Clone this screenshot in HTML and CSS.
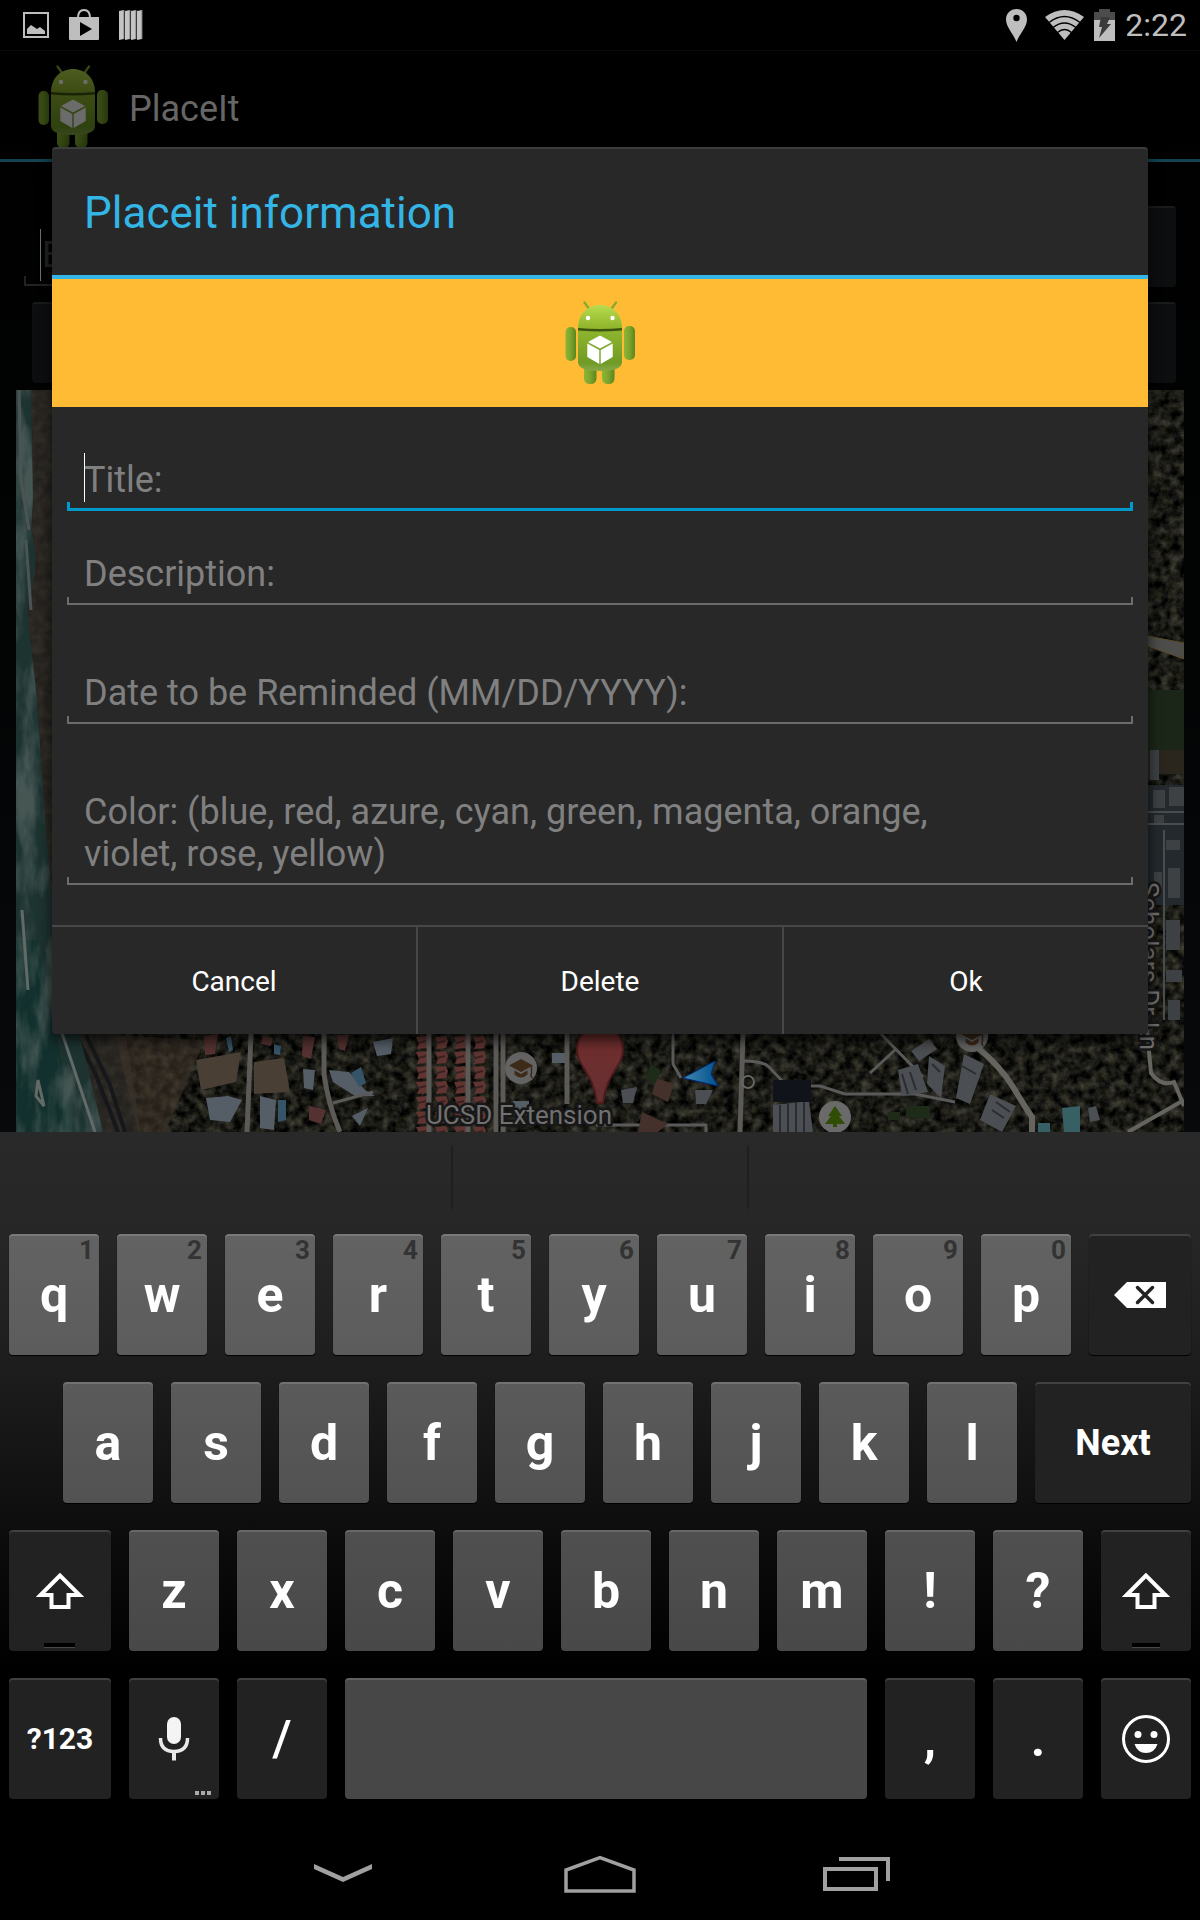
FILE: index.html
```html
<!DOCTYPE html>
<html lang="en">
<head>
<meta charset="utf-8">
<meta name="viewport" content="width=device-width, initial-scale=1">
<title>PlaceIt</title>
<link rel="stylesheet" href="styles.css">
</head>
<body>
<svg class="defs" width="0" height="0" aria-hidden="true">
  <defs>
    <linearGradient id="head" x1="0" y1="0" x2="0" y2="1"><stop offset="0" stop-color="#b9dc4e"/><stop offset="1" stop-color="#8db32a"/></linearGradient>
    <linearGradient id="torso" x1="0" y1="0" x2="0" y2="1"><stop offset="0" stop-color="#8fb52e"/><stop offset=".8" stop-color="#6f9a26"/><stop offset="1" stop-color="#8aa94a"/></linearGradient>
    <linearGradient id="limb" x1="0" y1="0" x2="1" y2="0"><stop offset="0" stop-color="#8db537"/><stop offset=".5" stop-color="#7ba52b"/><stop offset="1" stop-color="#5b8420"/></linearGradient>
    <symbol id="robot" viewBox="0 0 72 84">
      <path d="M20.500 1.500l5 7M52 1.500l-5 7" stroke="#86a834" stroke-width="2.200" stroke-linecap="round"/>
      <rect x="20" y="62" width="12.500" height="21" rx="5.500" fill="url(#limb)"/>
      <rect x="38" y="62" width="12.500" height="21" rx="5.500" fill="url(#limb)"/>
      <rect x="1.500" y="26" width="10.500" height="34" rx="5" fill="url(#limb)"/>
      <rect x="60" y="25" width="11" height="34" rx="5" fill="url(#limb)"/>
      <path d="M14 27h44v4H14z" fill="#3c5410"/>
      <path d="M14 27C14 13 24 4 36 4s22 9 22 23q-22 2-44 0z" fill="url(#head)"/>
      <path d="M14 29.500q22 2 44 0V61q0 9-22 9t-22-9z" fill="url(#torso)"/>
      <circle cx="24" cy="17" r="2.200" fill="#fff"/><circle cx="48.500" cy="17" r="2.200" fill="#fff"/>
      <path d="M36 34.500l12 6.500-12 6.500L24 41zM23.300 42.500l12 6.500v14l-12-7zM48.700 42.500l-12 6.500v14l12-7z" fill="#fff"/>
    </symbol>
    <symbol id="shift" viewBox="0 0 48 38">
      <path d="M24 3.500L4.500 23H15.500v12h17V23h11z" fill="none" stroke="#fff" stroke-width="4"/>
    </symbol>
    <symbol id="cap" viewBox="0 0 32 32">
      <circle cx="16" cy="16" r="16" fill="#636363"/>
      <path d="M16 7l12 6.500L16 20 4 13.500zM9.500 18.500l6.500 3.500 6.500-3.500v4q-6.500 6-13 0z" fill="#3e2a18"/>
      <path d="M26.500 14v7q-1.500 3 1 5" fill="none" stroke="#3e2a18" stroke-width="1.500"/>
    </symbol>
  </defs>
</svg>

<header class="status">
  <div class="status-group notices">
    <svg width="26" height="26" viewBox="0 0 26 26" aria-label="Screenshot"><path d="M1 1h24v24H1z" fill="none" stroke="#bebebe" stroke-width="2"/><path d="M4 22v-5l4-4 6 4 3-2 5 4v3z" fill="#bebebe"/></svg>
    <svg width="32" height="32" viewBox="0 0 32 32" aria-label="Play Store"><path d="M10 9q0-8 6-8t6 8" fill="none" stroke="#bebebe" stroke-width="2"/><path d="M1 8h30v22q0 1-1 1H2q-1 0-1-1z" fill="#bebebe"/><path d="M12 13l12 7-12 7z" fill="#000"/></svg>
    <svg width="24" height="30" viewBox="0 0 24 30" aria-label="Cards"><path d="M0 1l5-1v29l-5 1zM6 1l5-1v29l-5 1zM12 1l5-1v29l-5 1zM18 1l5-1v29l-5 1z" fill="#c4c4c4"/><path d="M5 0v29M11 0v29M17 0v29M23 0v29" stroke="#777" stroke-width="1"/></svg>
  </div>
  <div class="status-group">
    <svg class="pin-icon" width="21" height="33" viewBox="0 0 21 33" aria-label="Location"><path d="M10.500 0C4.500 0 0 4.500 0 10.500 0 18 7 24 10.500 33 14 24 21 18 21 10.500 21 4.500 16.500 0 10.500 0z" fill="#bebebe"/><circle cx="10.500" cy="9" r="3.200" fill="#000"/></svg>
    <svg width="39" height="30" viewBox="0 0 39 30" aria-label="Wi-Fi"><path d="M0 7Q19.500-7 39 7L19.500 30z" fill="#bebebe"/><path d="M4 12.500q15.500-12 31 0M8 17.500q11.500-9 23 0M12.500 22.500q7-6 14 0" fill="none" stroke="#000" stroke-width="1.500"/></svg>
    <svg width="21" height="32" viewBox="0 0 21 32" aria-label="Charging"><path d="M0 3h5V0h11v3h5v8H0z" fill="#4c4c4c"/><path d="M0 11h21v21H0z" fill="#bebebe"/><path d="M7 8h9l-3 7h4L5 29l3-11H5z" fill="#3a3a3a"/></svg>
    <time class="clock">2:22</time>
  </div>
</header>

<main class="stage">
  <section class="app" aria-hidden="true">
    <div class="action-bar">
      <svg width="72" height="84"><use href="#robot"/></svg>
      <span>PlaceIt</span>
    </div>
    <div class="search">
      <div class="search-field"><span class="search-hint">E</span></div>
      <button class="dim-button" type="button" tabindex="-1"></button>
    </div>
    <div class="tools"><button class="dim-button wide" type="button" tabindex="-1"></button></div>
    <div class="map">
      <svg viewBox="0 0 1168 742" preserveAspectRatio="xMidYMax slice">
        <defs>
          <filter id="land" x="0" y="0" width="100%" height="100%" color-interpolation-filters="sRGB">
            <feTurbulence type="fractalNoise" baseFrequency=".11" numOctaves="5" seed="8"/>
            <feColorMatrix values=".42 0 0 0 -.105  .4 .02 0 0 -.105  .34 0 .04 0 -.105  0 0 0 0 1"/>
          </filter>
          <filter id="surf" x="0" y="0" width="100%" height="100%" color-interpolation-filters="sRGB">
            <feTurbulence type="fractalNoise" baseFrequency=".05 .016" numOctaves="4" seed="3"/>
            <feColorMatrix values="0 0 0 0 .34  0 0 0 0 .4  0 0 0 0 .39  3 0 0 0 -1.200"/>
          </filter>
          <clipPath id="sea"><path d="M0 0h15l2 110-2 30q10 30-4 80l10 90 8 120 8 90 14 60 14 70 22 92H0z"/></clipPath>
          <pattern id="roofs" width="19" height="15" patternUnits="userSpaceOnUse"><path d="M1 2l11-1 2 5-2 7-10 1 2-5z" fill="#603431"/><path d="M3 8l8-2" stroke="#3b2020" stroke-width="2"/></pattern>
          <linearGradient id="pin" x1="0" y1="0" x2="0" y2="1"><stop offset="0" stop-color="#742e2e"/><stop offset="1" stop-color="#652f31"/></linearGradient>
          <linearGradient id="arrow" x1="0" y1="0" x2="1" y2="0"><stop offset="0" stop-color="#4288b0"/><stop offset="1" stop-color="#00508c"/></linearGradient>
        </defs>
        <rect width="1168" height="742" fill="#1b1c19"/>
        <rect width="1168" height="742" filter="url(#land)"/>
        <path d="M0 0h40v560l70 90 15 92H0z" fill="#302c28" opacity=".75"/>
        <path d="M99 645l90 5-40 92h-27z" fill="#3d342a" opacity=".6"/>
        <path d="M60 645l20 40 22 57M70 645l24 50 15 47" fill="none" stroke="#16171a" stroke-width="4"/>
        <g clip-path="url(#sea)">
          <rect width="140" height="742" fill="#1d3330"/>
          <path d="M0 550h20l40 192H0z" fill="#12302d"/>
          <rect width="140" height="742" filter="url(#surf)" opacity=".7"/>
        </g>
        <path d="M3 0l2 90 8 50M10 150l5 70" fill="none" stroke="#4c5453" stroke-width="3"/>
        <path d="M6 520l6 80M45 640l20 60 14 42M22 690l6 26-8-10z" fill="none" stroke="#626a68" stroke-width="3"/>
        <g fill="#4a3f34"><path d="M180 670l45-8-5 30-35 8zM238 672l30-4 6 34-36 2z"/></g>
        <g fill="#553231"><path d="M188 646l14-2-3 20-10 1zM287 646l12 1-4 22-9-3zM321 645l12 0-4 16-6-2zM247 646l10 2-2 8-10-2zM293 716l17 4-5 14-12-4z"/></g>
        <g fill="#555e67"><path d="M287 679l12 1-2 20-9-2zM313 680l20 2 16 18 10 6-20 0-22-14zM190 708l22-2 14 4-12 22-20-2zM244 706l16 4-2 30-14-2zM357 652l20-4-2 16-14 2zM336 726l16-8-8 18zM536 663l14 0v10h-14zM497 711l16 0v14h-16z"/></g>
        <g fill="#365468"><path d="M210 648l5-2 2 14-4 2zM262 710l8 0 0 20-8 2zM335 683l10-6 5 16-7 4zM258 654l7 2-1 9-6-1z"/></g>
        <rect x="400" y="645" width="72" height="97" fill="url(#roofs)"/>
        <g fill="none" stroke="#5c5a57" stroke-width="5"><path d="M235 644l-4 98M308 644v40q4 30 16 58M480 644v98M487 644v98M413 644v98M452 644v98M551 644v70M727 644l-3 98"/></g>
        <g fill="none" stroke="#5a5a5a" stroke-width="3"><path d="M317 713l40-11M657 644v30l8 14M865 644l42 43M854 683l25-23M630 735h60v7M829 704h70l40 8M580 735h60M727 671q20 0 26 6l18 19h33l25 8"/></g>
        <path d="M961 657q24 20 36 40t19 30v20" fill="none" stroke="#66645f" stroke-width="6"/>
        <path d="M1131 640l4 43q10 14 23 9l10 24M1112 742l56-32" fill="none" stroke="#66645f" stroke-width="4"/>
        <g fill="#4b4e52"><path d="M757 715l36-4 4 31h-40zM882 680l20-6 10 28-26 4zM913 666l16 10-4 32-14-14zM948 664l20 10-14 40-14-6zM974 704l26 12-14 26-22-12zM605 700l16-3-4 16-10 0zM679 700l18 0-7 14-10 0zM895 661l18-12 8 10-18 12zM1072 718l8-2 4 14-10 2z"/></g>
        <path d="M757 690h38v22h-38z" fill="#10141a"/>
        <path d="M764 715v27M772 713v29M780 712v30M788 712v30M886 684l6 20M894 682l6 18M916 674l8 8M946 676l14 8M980 712l14 10M976 720l12 8" stroke="#2b2d30" stroke-width="2"/>
        <g fill="#45312c"><path d="M640 688l18 6-6 18-16-8zM626 722l26 12-10 8h-20z"/></g>
        <g fill="#376064"><path d="M1046 718l18-2v26l-16 0zM1022 733h12v9h-12z"/></g>
        <g fill="#1d2b18"><path d="M890 716h24v12h-24zM872 722h12v8h-12zM635 674l10 6-6 14-10-6z"/></g>
        <circle cx="732" cy="692" r="6" fill="none" stroke="#666" stroke-width="2"/>
        <path d="M1126 245l42 8v16l-42-15z" fill="#4d4d4b" stroke="#5a4c26" stroke-width="1"/>
        <path d="M1130 300h38v60h-38z" fill="#1c2618"/><path d="M1132 360h36v24h-36z" fill="#2a261e"/>
        <g fill="#24292d"><path d="M1132 395h36v120h-36z"/></g>
        <g fill="#3d4144"><path d="M1134 360h9v30h-9zM1137 400h12v18h-12zM1153 397h15v19h-15zM1138 425h10v10h-10zM1150 450h14v10h-14zM1152 478h12v30h-12zM1138 482h8v18h-8zM1150 530h14v30h-14zM1150 580h16v12h-16zM1152 610h12v20h-12z"/></g>
        <path d="M1132 422h36M1132 434h36M1148 440v190" stroke="#4a4d50" stroke-width="2"/>
        <path d="M1080 24h40q2 0 2 2v55q0 2-2 2h-40z" fill="#484848"/>
        <use href="#cap" x="489" y="662" width="32" height="32"/>
        <use href="#cap" x="940" y="630" width="32" height="32"/>
        <circle cx="819" cy="727" r="16" fill="#6a6a6a"/>
        <path d="M819 716l7 10h-3l6 8h-8v3h-4v-3h-8l6-8h-3z" fill="#2f4d05"/>
        <path d="M584 636c-14 0-23 10-23 24 0 16 17 24 20 53h6c3-29 20-37 20-53 0-14-9-24-23-24z" fill="url(#pin)" stroke="#4e1b1c" stroke-width="2"/>
        <path d="M667 688l32-17-4 13 7 12z" fill="url(#arrow)" stroke="#002c7a" stroke-width="1"/>
        <text class="map-label" x="410" y="734">UCSD Extension</text>
        <text class="map-label" text-anchor="end" transform="translate(1124 660) rotate(90)">Scholars Dr Ln</text>
      </svg>
    </div>
  </section>

  <form class="dialog" role="dialog" aria-labelledby="dialog-title">
    <h1 class="dialog-title" id="dialog-title">Placeit information</h1>
    <div class="banner"><svg width="72" height="84" aria-hidden="true"><use href="#robot"/></svg></div>
    <div class="fields">
      <div class="focus-wrap">
        <input class="field focused" type="text" aria-label="Title" placeholder="Title:">
        <span class="caret"></span>
      </div>
      <input class="field description" type="text" aria-label="Description" placeholder="Description:">
      <input class="field" type="text" aria-label="Date to be reminded" placeholder="Date to be Reminded (MM/DD/YYYY):">
      <textarea class="field" rows="2" aria-label="Color" placeholder="Color: (blue, red, azure, cyan, green, magenta, orange,&#10;violet, rose, yellow)"></textarea>
    </div>
    <div class="actions">
      <button type="button">Cancel</button>
      <button type="button">Delete</button>
      <button type="button">Ok</button>
    </div>
  </form>
</main>

<section class="keyboard" aria-label="Keyboard">
  <div class="suggestions"><span></span><span class="middle"></span><span></span></div>
  <div class="row">
    <button class="key">q<small>1</small></button><button class="key">w<small>2</small></button><button class="key">e<small>3</small></button><button class="key">r<small>4</small></button><button class="key">t<small>5</small></button><button class="key">y<small>6</small></button><button class="key">u<small>7</small></button><button class="key">i<small>8</small></button><button class="key">o<small>9</small></button><button class="key">p<small>0</small></button>
    <button class="key dark mid" aria-label="Backspace"><svg width="52" height="26" viewBox="0 0 52 26"><path d="M0 13L13 0h39v26H13z" fill="#fff"/><path d="M23.500 5.500l15 15M38.500 5.500l-15 15" stroke="#222" stroke-width="3.500" stroke-linecap="round"/></svg></button>
  </div>
  <div class="row indent">
    <button class="key">a</button><button class="key">s</button><button class="key">d</button><button class="key">f</button><button class="key">g</button><button class="key">h</button><button class="key">j</button><button class="key">k</button><button class="key">l</button>
    <button class="key dark next">Next</button>
  </div>
  <div class="row">
    <button class="key dark mid lock" aria-label="Shift"><svg width="48" height="38"><use href="#shift"/></svg></button>
    <button class="key">z</button><button class="key">x</button><button class="key">c</button><button class="key">v</button><button class="key">b</button><button class="key">n</button><button class="key">m</button><button class="key">!</button><button class="key">?</button>
    <button class="key dark lock" aria-label="Shift"><svg width="48" height="38"><use href="#shift"/></svg></button>
  </div>
  <div class="row">
    <button class="key dark mid symbols">?123</button>
    <button class="key dark" aria-label="Voice input"><svg width="32" height="44" viewBox="0 0 32 44"><rect x="9" y="0" width="14" height="27" rx="7" fill="#f4f4f4"/><path d="M2.500 21q0 13.500 13.500 13.500T29.500 21" fill="none" stroke="#e8e8e8" stroke-width="3.500"/><path d="M16 34v9.500" stroke="#e8e8e8" stroke-width="4"/></svg><span class="more"></span></button>
    <button class="key dark slash">/</button>
    <button class="key space" aria-label="Space"></button>
    <button class="key dark">,</button>
    <button class="key dark">.</button>
    <button class="key dark" aria-label="Emoji"><svg width="48" height="48" viewBox="0 0 48 48"><circle cx="24" cy="24" r="22.500" fill="none" stroke="#fff" stroke-width="3"/><circle cx="16" cy="19.500" r="3.500" fill="#fff"/><circle cx="32" cy="19.500" r="3.500" fill="#fff"/><path d="M12.500 29h23q-3 9-11.500 9t-11.500-9z" fill="#fff"/></svg></button>
  </div>
</section>

<nav class="system-nav" aria-label="System">
  <button aria-label="Hide keyboard"><svg width="58" height="20" viewBox="0 0 58 20"><path d="M0 0l29 13L58 0v5L29 18 0 5z" fill="#a0a0a0"/></svg></button>
  <button aria-label="Home"><svg width="72" height="38" viewBox="0 0 72 38"><path d="M2 36V15L36 2.500 70 15v21z" fill="none" stroke="#a0a0a0" stroke-width="3.500"/></svg></button>
  <button aria-label="Recent apps"><svg width="68" height="34" viewBox="0 0 68 34"><path d="M2 12h51v20H2z" fill="none" stroke="#a0a0a0" stroke-width="4"/><path d="M16 2h49v22" fill="none" stroke="#a0a0a0" stroke-width="4"/></svg></button>
</nav>
</body>
</html>
```
FILE: styles.css
```css
* { box-sizing: border-box; }

body {
  margin: 0;
  min-height: 100vh;
  display: flex;
  flex-direction: column;
  background: #000;
  color: #fff;
  font-family: Roboto, "Noto Sans", sans-serif;
}

svg { display: block; flex: none; }
.defs { position: absolute; }
button { font-family: inherit; color: inherit; border: 0; padding: 0; background: none; }

/* Status bar */
.status {
  height: 51px;
  display: flex;
  align-items: center;
  justify-content: space-between;
  padding: 0 13px 0 23px;
  border-bottom: 1px solid #0a0a0a;
}
.status-group { display: flex; align-items: center; gap: 10px; }
.notices { gap: 19px; }
.pin-icon { margin-right: 8px; }
.clock { font-size: 32px; line-height: 40px; color: #bebebe; }

/* App behind the dialog; both share one grid cell */
.stage { flex: 1; display: grid; grid-template: 1fr / 1fr; }
.app, .dialog { grid-area: 1 / 1; min-width: 0; }
.app {
  display: flex;
  flex-direction: column;
  background: linear-gradient(#000, #020303 50%, #08090b);
}
.action-bar {
  height: 111px;
  display: flex;
  align-items: center;
  gap: 20px;
  padding: 3px 0 0 37px;
  border-bottom: 3px solid #134353;
  font-size: 36px;
  line-height: 44px;
  color: #666;
}
.action-bar svg { filter: brightness(.42); }
.action-bar span { padding-top: 4px; }
.search { display: flex; padding: 44px 24px 0; gap: 16px; }
.search-field {
  flex: 1;
  align-self: flex-start;
  height: 80px;
  padding: 23px 16px 0;
  border-bottom: 2px solid #222;
  background: linear-gradient(#222, #222) left bottom / 2px 8px no-repeat;
}
.search-hint {
  display: block;
  border-left: 1px solid #707070;
  padding-left: 1px;
  font-size: 36px;
  line-height: 52px;
  color: #222;
}
.dim-button {
  width: 160px;
  height: 81px;
  border-radius: 4px;
  border-top: 2px solid #181a1b;
  background: #0c0e0f;
}
.tools { padding: 15px 24px 0 32px; }
.wide { width: 100%; display: block; }
.map { flex: 1; margin: 7px 16px 0; position: relative; }
.map svg { position: absolute; inset: 0; width: 100%; height: 100%; }
.map-label {
  font-size: 26px;
  fill: #707070;
  stroke: #171717;
  stroke-width: 5px;
  stroke-linejoin: round;
  paint-order: stroke;
}

/* Dialog */
.dialog {
  z-index: 1;
  align-self: start;
  margin: 96px 52px 0;
  background: #282828;
  border-top: 2px solid #3c3c3c;
  border-radius: 4px;
  box-shadow: 0 6px 14px rgba(0, 0, 0, .7);
}
.dialog-title {
  margin: 0;
  padding: 2px 32px 0;
  font-size: 44px;
  font-weight: 400;
  line-height: 124px;
  color: #33b5e5;
  border-bottom: 4px solid #33b5e5;
}
.banner {
  height: 128px;
  display: flex;
  justify-content: center;
  align-items: center;
  background: #ffbb33;
}
.fields {
  display: flex;
  flex-direction: column;
  gap: 67px;
  padding: 52px 15px 40px;
}
.focus-wrap { position: relative; display: flex; }
.description { margin-top: -25px; }
.field {
  --line: #6c6c6c;
  display: block;
  width: 100%;
  padding: 0 17px 8px;
  border: 0;
  border-bottom: 2px solid var(--line);
  border-radius: 0;
  outline: 0;
  resize: none;
  overflow: hidden;
  color: #fff;
  font: 36px/42px Roboto, "Noto Sans", sans-serif;
  background:
    linear-gradient(var(--line), var(--line)) left bottom / 2px 6px no-repeat,
    linear-gradient(var(--line), var(--line)) right bottom / 2px 6px no-repeat;
}
.field::placeholder { color: #808080; opacity: 1; }
.focused { --line: #0099cc; padding-bottom: 7px; border-bottom-width: 3px; background-size: 3px 6px; }
.caret { position: absolute; left: 17px; bottom: 9px; width: 1px; height: 49px; background: #fff; }
.actions { display: flex; border-top: 2px solid #474747; }
.actions button { flex: 1; height: 107px; padding-top: 2px; font-size: 28px; }
.actions button + button { border-left: 2px solid #474747; }

/* Keyboard */
.keyboard {
  padding-bottom: 10px;
  background: linear-gradient(#292929, #262626 16%, #1c1c1c 36%, #0e0e0e 56%, #000 78%);
}
.suggestions { height: 88px; display: flex; padding: 13px 0 11px; }
.suggestions span { flex: 1; }
.suggestions .middle {
  flex: 0 0 298px;
  border: solid #1f1f1f;
  border-width: 0 2px;
}
.row { display: flex; gap: 18px; padding: 14px 9px; }
.row + .row { padding-top: 13px; }
.row.indent { padding-left: 63px; }
.key {
  position: relative;
  flex: 90 1 0;
  min-width: 0;
  height: 121px;
  display: flex;
  align-items: center;
  justify-content: center;
  border-radius: 4px;
  background: rgba(255, 255, 255, .28);
  box-shadow: inset 0 2px rgba(255, 255, 255, .14), 0 1px 1px #000;
  font-size: 50px;
  font-weight: 700;
  line-height: 58px;
}
.key small {
  position: absolute;
  top: 2px;
  right: 5px;
  font-size: 26px;
  line-height: 28px;
  color: #333;
}
.key.dark { background: #222; }
.key.mid { flex-grow: 102; }
.key.next { flex-grow: 156; font-size: 36px; }
.key.space { flex-grow: 522; }
.key.symbols { font-size: 30px; }
.key.slash { font-weight: 500; }
.lock::after {
  content: "";
  position: absolute;
  left: 34%;
  right: 35%;
  bottom: 4px;
  height: 4px;
  background: #000;
  box-shadow: 0 1px #484848;
}
.more {
  position: absolute;
  right: 8px;
  bottom: 4px;
  width: 16px;
  height: 4px;
  background: repeating-linear-gradient(90deg, #aaa 0 4px, transparent 4px 6px);
}

/* System navigation */
.system-nav { height: 97px; display: flex; justify-content: center; }
.system-nav button { flex: 0 0 257px; display: flex; align-items: center; justify-content: center; padding-top: 4px; }
```
